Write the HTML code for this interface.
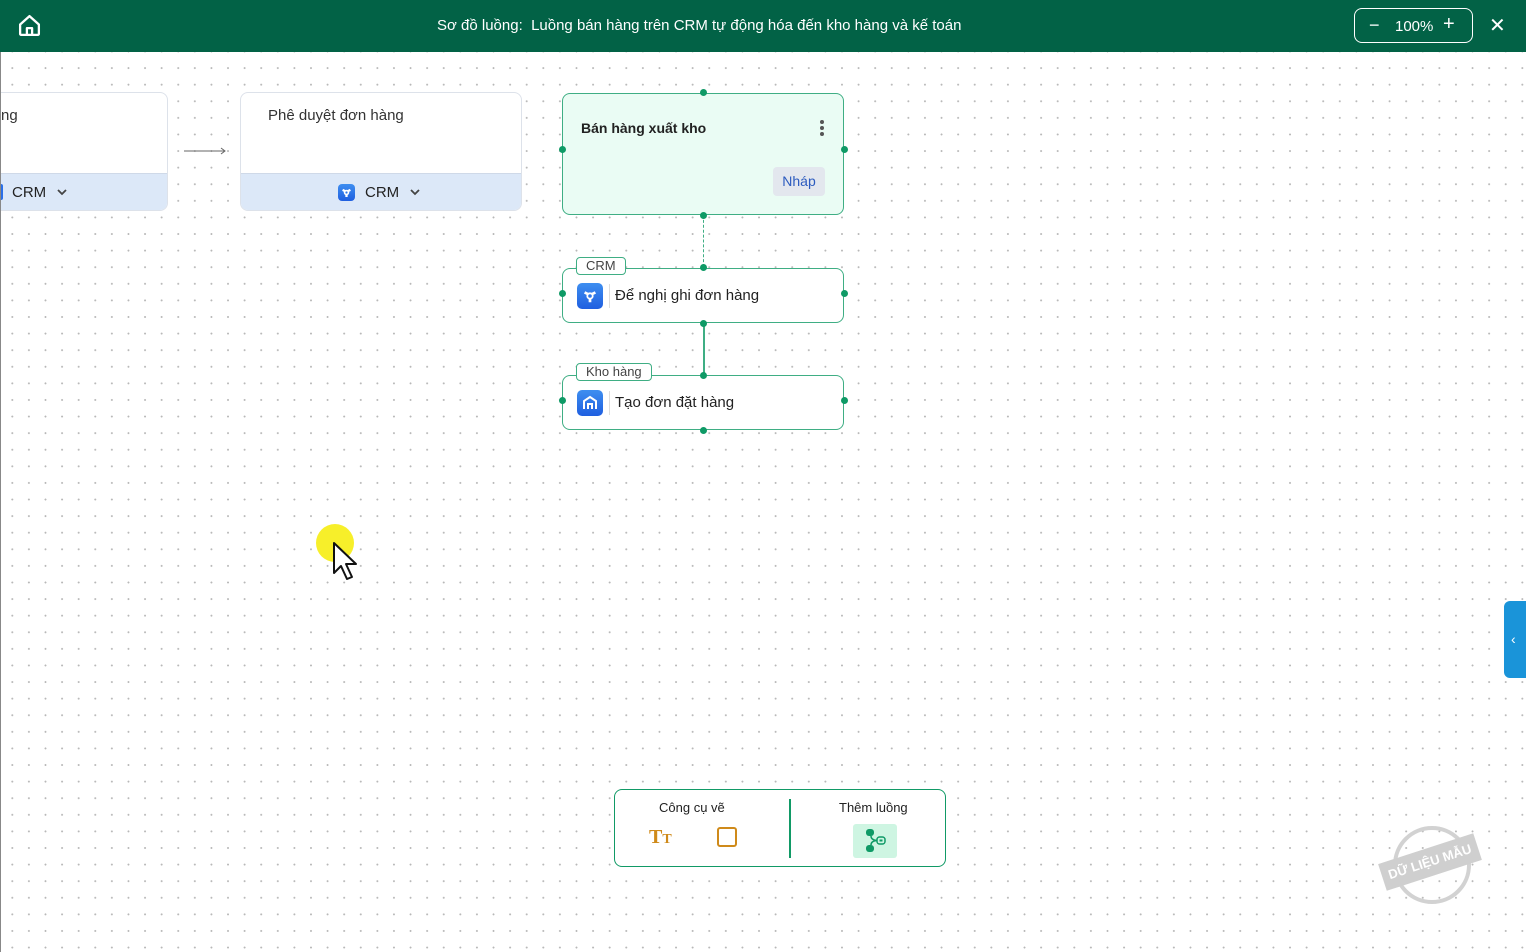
<!DOCTYPE html>
<html><head><meta charset="utf-8"><style>
*{box-sizing:border-box;margin:0;padding:0}
body{width:1526px;height:952px;overflow:hidden;position:relative;font-family:"Liberation Sans","DejaVu Sans",sans-serif;background:#fff;
background-image:radial-gradient(circle,#b8b8b8 0.8px,transparent 1.1px);background-size:16.6px 16.6px;background-position:4px 10px}
.top{position:absolute;left:0;top:0;width:1526px;height:52px;background:#026246;color:#fff}
.abs{position:absolute}
.card{position:absolute;background:#fff;border:1px solid #dde2ea;border-radius:8px;overflow:hidden}
.card .foot{position:absolute;left:0;right:0;bottom:0;height:37px;background:#dce8f8;border-top:1px solid #cfd9e8;font-size:15px;color:#222}
.dot{position:absolute;width:7px;height:7px;border-radius:50%;background:#0f9a66}
.node{position:absolute;border:1.5px solid #3fae84;border-radius:8px;background:#fff}
.tag{position:absolute;background:#fff;border:1.5px solid #3fae84;border-radius:4px;font-size:13px;color:#444;padding:0 9px;height:18px;line-height:15px}
.ico{position:absolute;width:26px;height:26px;border-radius:5px;background:linear-gradient(#3e8ef0,#1f5fe0)}
</style></head><body>
<div class="top">
<svg class="abs" style="left:17px;top:13px" width="25" height="25" viewBox="0 0 24 24" fill="none" stroke="#fff" stroke-width="2.2" stroke-linejoin="round"><path d="M3 11 L12 3 L21 11 V20 a1 1 0 0 1-1 1 H4 a1 1 0 0 1-1-1Z"/><path d="M9.5 21v-6.5h5V21"/></svg>
<span class="abs" style="left:437px;top:17px;font-size:15px;white-space:nowrap">Sơ đồ luồng:&nbsp; Luồng bán hàng trên CRM tự động hóa đến kho hàng và kế toán</span>
<div class="abs" style="left:1354px;top:8px;width:119px;height:35px;border:1.3px solid #fff;border-radius:8px;font-size:15px">
<span class="abs" style="left:14px;top:7px;font-size:18px;line-height:18px">−</span>
<span class="abs" style="left:40px;top:9px">100%</span>
<span class="abs" style="left:88px;top:5px;font-size:20px;line-height:20px">+</span></div>
<span class="abs" style="left:1489px;top:13px;font-size:20px;font-weight:bold">✕</span>
</div>

<div class="card" style="left:-10px;top:92px;width:178px;height:119px">
<span class="abs" style="left:10px;top:14px;font-size:15px;color:#333">ng</span>
<div class="foot"><div class="abs" style="left:6px;top:10px;width:6px;height:16px;background:#2a6fe8;border-radius:2px"></div><span class="abs" style="left:21px;top:10px">CRM</span>
<svg class="abs" style="left:65px;top:14px" width="12" height="8" viewBox="0 0 12 8"><path d="M2 2l4 4 4-4" stroke="#444" stroke-width="1.8" fill="none"/></svg></div>
</div>
<svg class="abs" style="left:183px;top:145px" width="45" height="10"><path d="M1 6H42M38 3l4 3-4 3" stroke="#666" stroke-width="1" fill="none"/></svg>
<div class="card" style="left:240px;top:92px;width:282px;height:119px">
<span class="abs" style="left:27px;top:14px;font-size:15px;color:#333">Phê duyệt đơn hàng</span>
<div class="foot"><div class="ico" style="left:97px;top:10px;width:17px;height:17px;border-radius:4px"></div>
<svg class="abs" style="left:99px;top:12px" width="13" height="13" viewBox="0 0 20 18"><circle cx="10" cy="9" r="3" fill="none" stroke="#fff" stroke-width="2.5"/><path d="M4 5l4 2M16 5l-4 2M10 12v4" stroke="#fff" stroke-width="3.5"/></svg>
<span class="abs" style="left:124px;top:10px">CRM</span>
<svg class="abs" style="left:168px;top:14px" width="12" height="8" viewBox="0 0 12 8"><path d="M2 2l4 4 4-4" stroke="#444" stroke-width="1.8" fill="none"/></svg></div>
</div>

<div class="node" style="left:562px;top:93px;width:282px;height:122px;background:#eafcf4">
<span class="abs" style="left:18px;top:26px;font-size:14px;font-weight:bold;color:#222">Bán hàng xuất kho</span>
<div class="abs" style="left:257px;top:26px;width:4px;font-size:0">
<div style="width:4px;height:4px;border-radius:50%;background:#555;margin-bottom:2px"></div><div style="width:4px;height:4px;border-radius:50%;background:#555;margin-bottom:2px"></div><div style="width:4px;height:4px;border-radius:50%;background:#555"></div></div>
<div class="abs" style="left:210px;top:73px;width:52px;height:29px;background:#e3e7ee;border-radius:4px;font-size:14px;color:#2c5bbf;text-align:center;line-height:29px">Nháp</div>
</div>
<div class="abs" style="left:703px;top:215px;height:52px;border-left:1.5px dashed #3fae84"></div>
<div class="abs" style="left:703px;top:323px;width:1.5px;height:52px;background:#3fae84"></div>

<div class="node" style="left:562px;top:268px;width:282px;height:55px">
<div class="ico" style="left:14px;top:14px"></div>
<svg class="abs" style="left:18px;top:18px" width="18" height="18" viewBox="0 0 20 18"><circle cx="10" cy="9" r="3" fill="none" stroke="#fff" stroke-width="2"/><path d="M4 5l4 2M16 5l-4 2M10 12v4" stroke="#fff" stroke-width="3"/></svg>
<div class="abs" style="left:46px;top:15px;height:24px;border-left:1px solid #ddd"></div>
<span class="abs" style="left:52px;top:18px;font-size:15px;color:#222">Để nghị ghi đơn hàng</span></div>
<div class="tag" style="left:576px;top:257px">CRM</div>
<div class="node" style="left:562px;top:375px;width:282px;height:55px">
<div class="ico" style="left:14px;top:14px"></div>
<svg class="abs" style="left:19px;top:19px" width="16" height="15" viewBox="0 0 16 15"><path d="M2 14V6l6-4 6 4v8M6 14V9h4v5" stroke="#fff" stroke-width="2" fill="none"/></svg>
<div class="abs" style="left:46px;top:15px;height:24px;border-left:1px solid #ddd"></div>
<span class="abs" style="left:52px;top:18px;font-size:15px;color:#222">Tạo đơn đặt hàng</span></div>
<div class="tag" style="left:576px;top:363px">Kho hàng</div>

<div class="dot" style="left:700px;top:89px"></div><div class="dot" style="left:559px;top:146px"></div><div class="dot" style="left:841px;top:146px"></div><div class="dot" style="left:700px;top:212px"></div>
<div class="dot" style="left:700px;top:264px"></div><div class="dot" style="left:559px;top:290px"></div><div class="dot" style="left:841px;top:290px"></div><div class="dot" style="left:700px;top:320px"></div>
<div class="dot" style="left:700px;top:372px"></div><div class="dot" style="left:559px;top:397px"></div><div class="dot" style="left:841px;top:397px"></div><div class="dot" style="left:700px;top:427px"></div>

<div class="abs" style="left:316px;top:524px;width:38px;height:38px;border-radius:50%;background:#f7ef2a"></div>
<svg class="abs" style="left:332px;top:541px" width="30" height="44" viewBox="0 0 30 44"><path d="M2 2V32L9 25L15 38L20 36L14 23H24Z" fill="#fff" stroke="#111" stroke-width="2" stroke-linejoin="round"/></svg>

<div class="abs" style="left:614px;top:789px;width:332px;height:78px;border:1.5px solid #119a66;border-radius:8px;background:#fff">
<span class="abs" style="left:44px;top:10px;font-size:13px;color:#222">Công cụ vẽ</span>
<span class="abs" style="left:34px;top:36px;font-size:20px;font-weight:bold;color:#cf8a1a;font-family:'Liberation Serif',serif">T<span style="font-size:14px">T</span></span>
<div class="abs" style="left:102px;top:37px;width:20px;height:20px;border:2.5px solid #cf8a1a;border-radius:3px"></div>
<div class="abs" style="left:174px;top:9px;height:59px;border-left:2px solid #119a66"></div>
<span class="abs" style="left:224px;top:10px;font-size:13px;color:#222">Thêm luồng</span>
<div class="abs" style="left:238px;top:34px;width:44px;height:34px;background:#cef5e2;border-radius:3px">
<svg class="abs" style="left:12px;top:4px" width="22" height="26" viewBox="0 0 22 26"><rect x="1" y="1" width="8" height="7" rx="3" fill="#0f9a66"/><rect x="1" y="17" width="8" height="7" rx="3" fill="#0f9a66"/><rect x="12" y="9" width="8" height="7" rx="2.5" fill="none" stroke="#0f9a66" stroke-width="1.5"/><rect x="14.5" y="11.5" width="3" height="2" fill="#0f9a66"/><path d="M6 8q0 4 6 4.5M6 17q0-4 6-4.5" stroke="#0f9a66" stroke-width="1.5" fill="none"/></svg></div>
</div>

<div class="abs" style="left:1504px;top:601px;width:24px;height:77px;background:#1a94d9;border-radius:6px 0 0 6px;color:#fff;font-size:14px;line-height:77px;padding-left:7px">‹</div>

<div class="abs" style="left:1393px;top:826px;width:78px;height:78px;border:4px solid #d2d2d2;border-radius:50%"></div>
<div class="abs" style="left:1380px;top:848px;width:100px;height:28px;background:#cfcfcf;transform:rotate(-18deg);color:#fff;font-weight:bold;font-size:13px;text-align:center;line-height:28px">DỮ LIỆU MẪU</div>
<div class="abs" style="left:0;top:52px;width:1px;height:900px;background:#888"></div>
</body></html>
